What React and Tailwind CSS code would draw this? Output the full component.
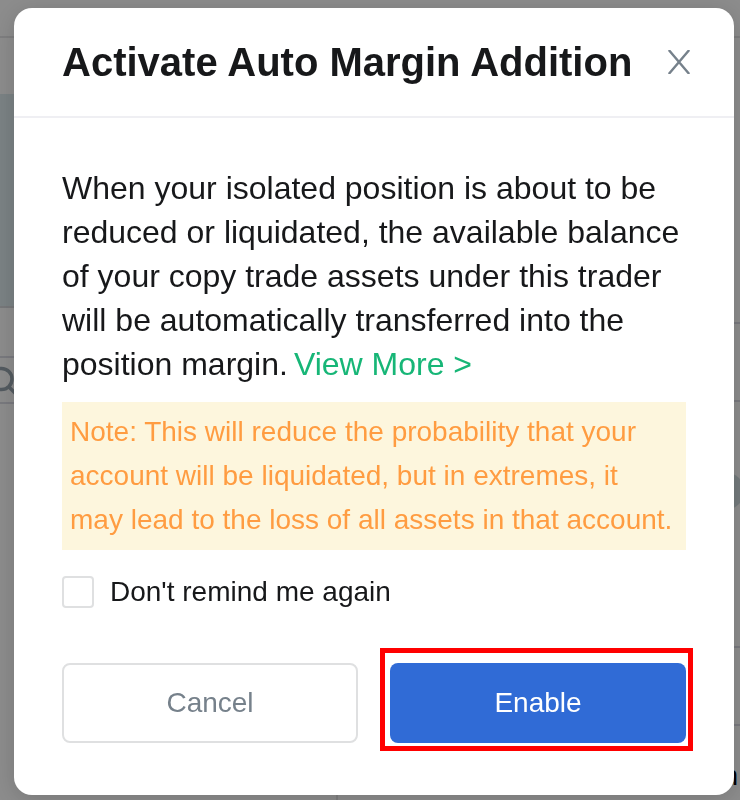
import { useState } from "react"

// Trading page that stays visible around the dialog
function PageBackdrop() {
  return (
    <div aria-hidden="true" className="flex h-screen flex-col overflow-hidden bg-white">
      <div className="h-[38px] shrink-0 border-b-2 border-[#e6e6e8]" />
      <div className="flex grow">
        <div className="flex w-[338px] shrink-0 flex-col border-r-2 border-[#e6e6e8]">
          <div className="mt-14 h-[214px] border-b-2 border-[#d8dade] bg-[#dfecf0]" />
          <div className="mt-12 flex h-12 items-center border-y-2 border-[#dcdde6]">
            <svg viewBox="0 0 20 36" className="h-9 w-5 text-[#98a5af]" fill="none" stroke="currentColor" strokeWidth="3.5">
              <circle cx="1.5" cy="17" r="10.5" />
              <path d="M8.5 24.5l8 8" />
            </svg>
          </div>
        </div>
        <div className="flex grow flex-col">
          <div className="h-[286px] border-b-2 border-[#dcdde6]" />
          <div className="h-[78px] border-b-2 border-[#dcdde6]" />
          <div className="flex h-[246px] items-start justify-end border-b-2 border-[#dcdde6] pt-[70px]">
            <span className="-mr-1 size-[38px] rounded-full bg-[#d3dfe2]" />
          </div>
          <div className="h-[78px] border-b-2 border-[#dcdde6]" />
          <p className="pt-[34px] pr-0.5 text-right text-[28px] leading-8 text-black">n</p>
        </div>
      </div>
    </div>
  )
}

function CloseIcon() {
  return (
    <svg viewBox="0 0 24 24" className="size-6" fill="none" stroke="currentColor" strokeWidth="2.4">
      <path d="M1.8 0L22.2 24M22.2 0L1.8 24" />
    </svg>
  )
}

export default function App() {
  const [skipReminder, setSkipReminder] = useState(false)

  return (
    <div className="font-['Liberation_Sans',Arial,sans-serif] text-[#17181a]">
      <PageBackdrop />

      <div className="fixed inset-0 overflow-y-auto bg-black/45 pt-2 pr-1.5 pl-3.5">
        <div
          role="dialog"
          aria-modal="true"
          aria-labelledby="dialog-title"
          className="rounded-[18px] bg-white shadow-[0_4px_24px_rgba(0,0,0,0.16)]"
        >
          <header className="flex items-center justify-between border-b-2 border-[#efeff3] pt-7 pr-[43px] pb-7 pl-12">
            <h2 id="dialog-title" className="text-[40px] leading-[52px] font-bold">
              Activate Auto Margin Addition
            </h2>
            <button type="button" aria-label="Close" className="text-[#76818b]">
              <CloseIcon />
            </button>
          </header>

          <div className="px-12 pt-12 pb-[52px]">
            <p className="text-[32px] leading-[44px]">
              When your isolated position is about to be reduced or liquidated, the available balance of your copy
              trade assets under this trader will be automatically transferred into the position margin.
              <a href="#more" className="ml-1.5 text-[#17b677]">View More &gt;</a>
            </p>

            <p className="mt-4 bg-[#fdf6dd] p-2 text-[28px] leading-[44px] text-[#ff9c41]">
              Note: This will reduce the probability that your account will be liquidated, but in extremes, it may
              lead to the loss of all assets in that account.
            </p>

            <label className="mt-6 flex items-center gap-4 text-[28px] leading-9">
              <input
                type="checkbox"
                checked={skipReminder}
                onChange={(e) => setSkipReminder(e.target.checked)}
                className="size-8 appearance-none rounded border-2 border-[#dfe0e1] bg-white checked:border-[#306bd6] checked:bg-[#306bd6]"
              />
              Don't remind me again
            </label>

            <div className="mt-[53px] grid grid-cols-2 gap-8 text-[28px]">
              <button type="button" className="h-20 rounded-lg border-2 border-[#dfe0e1] text-[#76818b]">
                Cancel
              </button>
              <div className="relative">
                <button type="button" className="h-20 w-full rounded-lg bg-[#306bd6] text-white">
                  Enable
                </button>
                {/* highlight around the main action */}
                <span className="pointer-events-none absolute -top-[15px] -right-[7px] -bottom-2 -left-2.5 border-5 border-[#ff0000]" />
              </div>
            </div>
          </div>
        </div>
      </div>
    </div>
  )
}
